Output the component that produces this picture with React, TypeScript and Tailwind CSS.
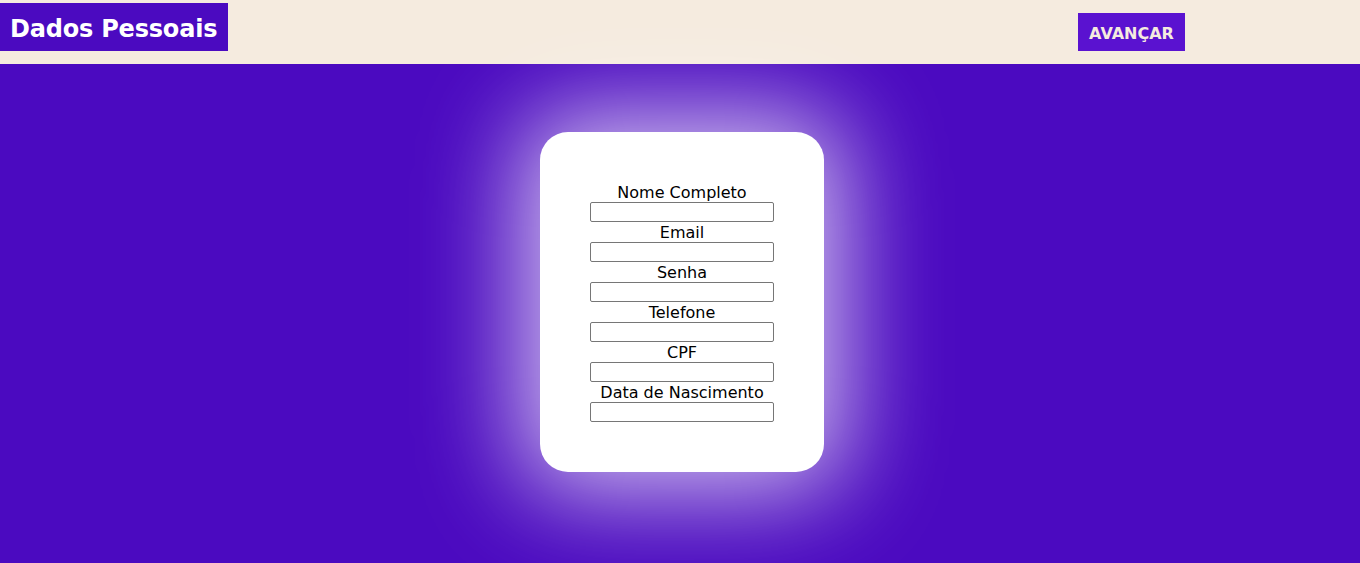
import React from "react";

const fields = ["Nome Completo", "Email", "Senha", "Telefone", "CPF", "Data de Nascimento"];

export default function App() {
  return (
    <div className="min-h-screen flex flex-col bg-[#4b0ac0]" style={{ fontFamily: '"DejaVu Sans", Verdana, sans-serif' }}>
      <header className="h-[64px] bg-[#f5ebdf] flex items-start justify-between shrink-0">
        <div className="mt-[3px] h-[48px] w-[228px] bg-[#4b0ac0] flex items-center pl-[10px] pt-[3px]">
          <h1 className="text-white font-bold text-[24px] leading-none tracking-[-0.2px]">Dados Pessoais</h1>
        </div>
        <button className="mt-[13px] mr-[175px] h-[38px] w-[107px] bg-[#5a12d0] text-[#f5ebdf] font-bold text-[16px] flex items-center justify-center pt-[3px]">
          AVANÇAR
        </button>
      </header>
      <main className="flex-1 flex justify-center pt-[68px] pl-[4px]">
        <div className="w-[284px] h-[340px] bg-white rounded-[28px] shadow-[0_0_100px_20px_rgba(255,255,255,0.75)] flex flex-col items-center pt-[50px]">
          {fields.map((f) => (
            <div key={f} className="flex flex-col items-center">
              <label className="text-[16px] leading-[20px] h-[20px] pt-[1px] text-black">{f}</label>
              <input className="w-[184px] h-[20px] border border-[#767676] rounded-[2px] bg-white" />
            </div>
          ))}
        </div>
      </main>
    </div>
  );
}
